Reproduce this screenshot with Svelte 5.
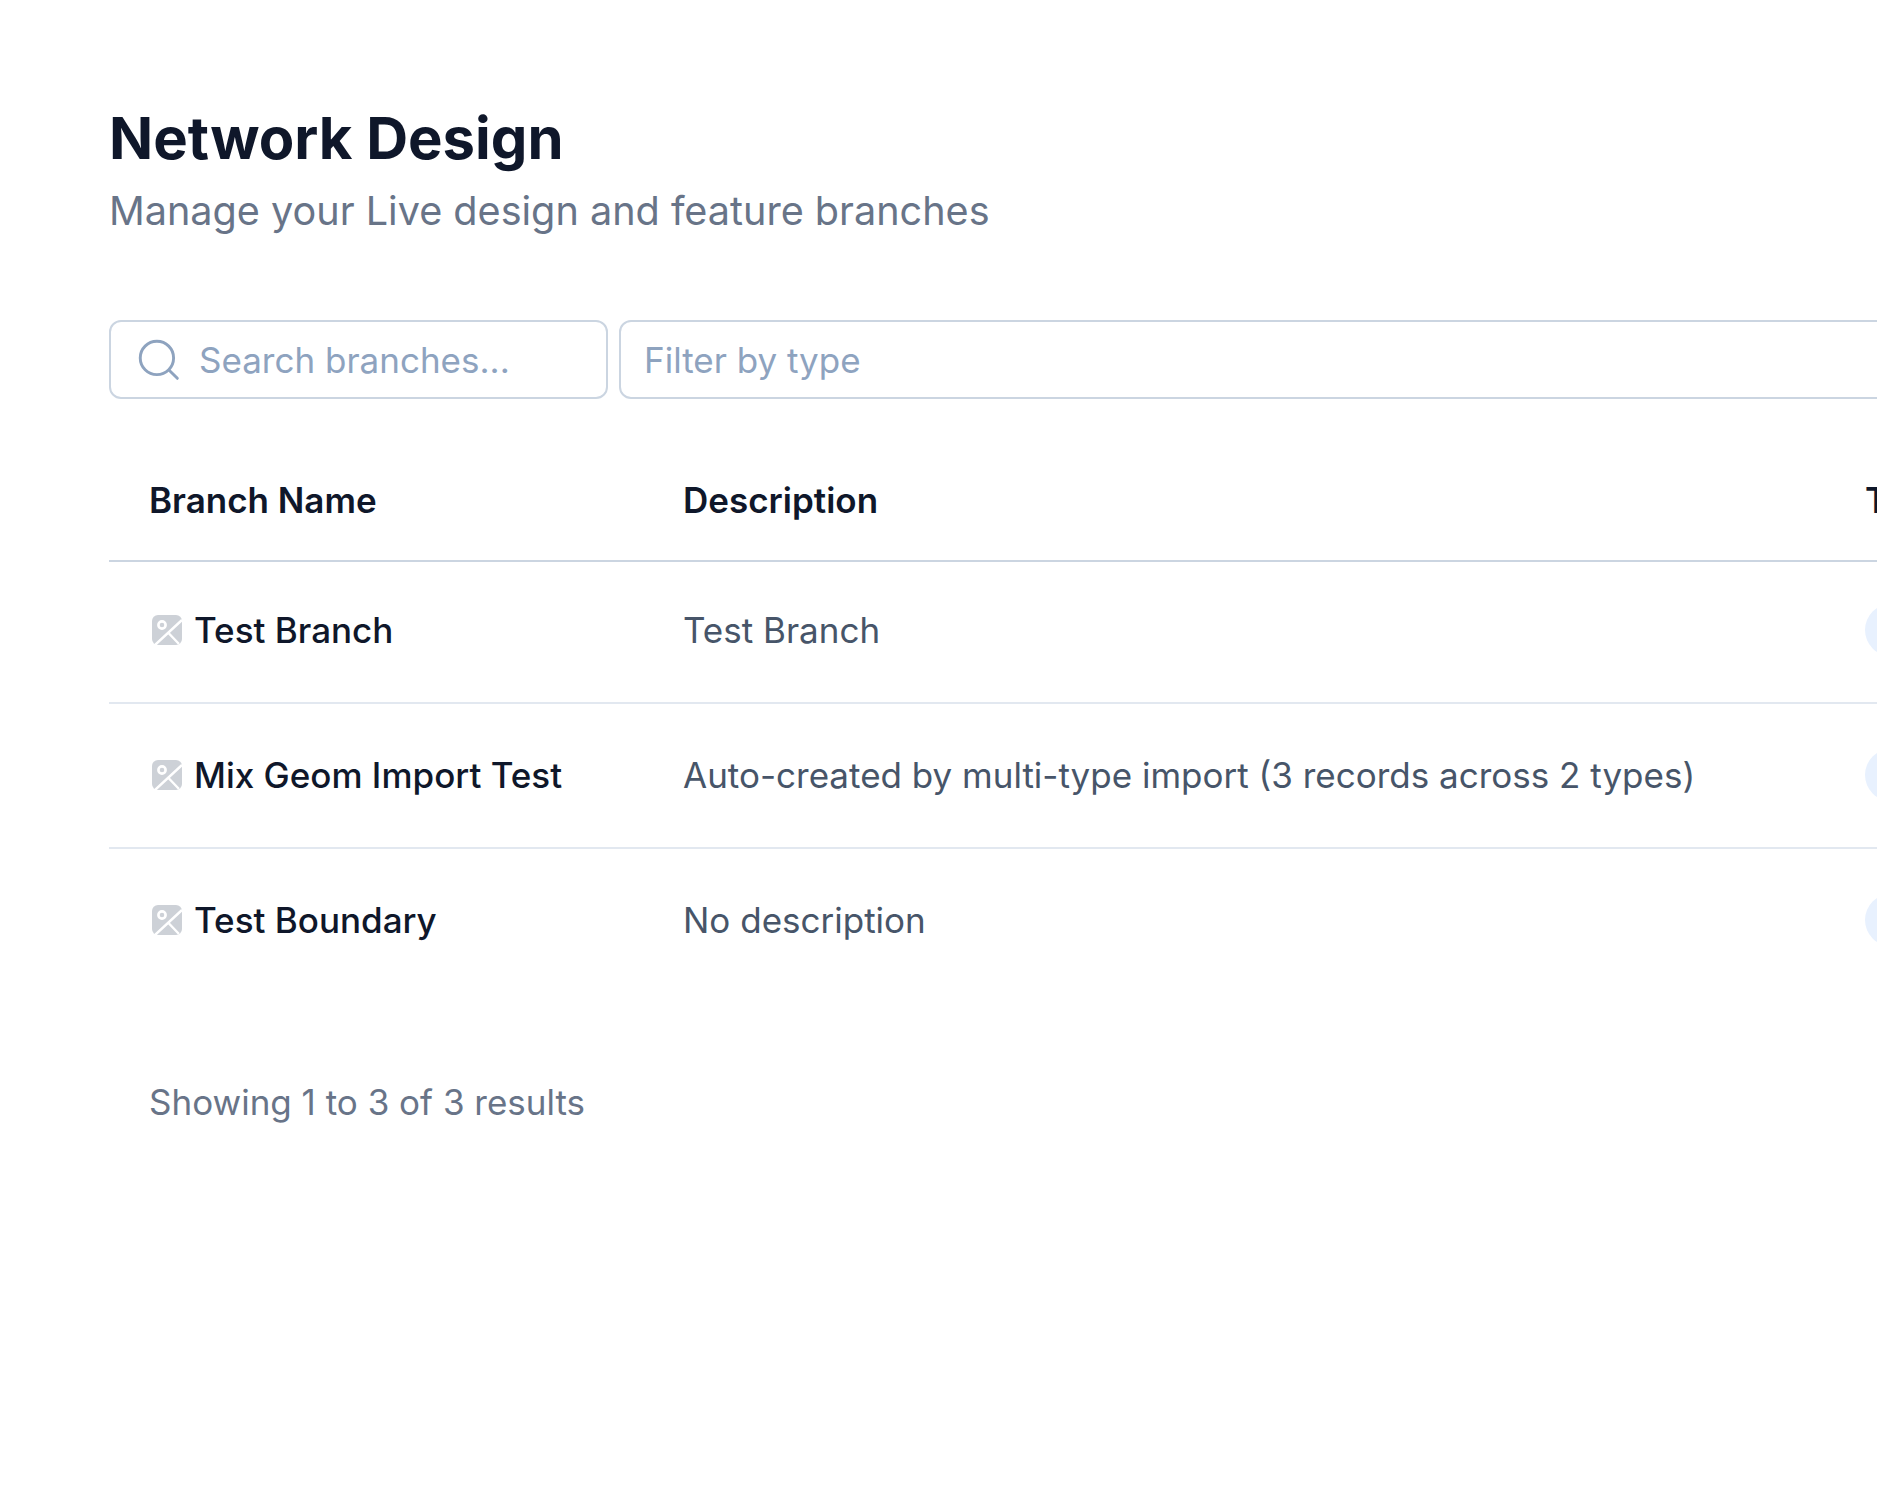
<script>
  const branches = [
    { name: 'Test Branch', description: 'Test Branch', type: 'Feature' },
    { name: 'Mix Geom Import Test', description: 'Auto-created by multi-type import (3 records across 2 types)', type: 'Feature' },
    { name: 'Test Boundary', description: 'No description', type: 'Feature' }
  ];
</script>

<div class="page">
  <header>
    <h1>Network Design</h1>
    <p class="subtitle">Manage your Live design and feature branches</p>
  </header>

  <div class="filters">
    <label class="search">
      <svg viewBox="0 0 24 24" width="50" height="50" fill="none" stroke="#8ea3bf" stroke-width="1.4" stroke-linecap="round">
        <circle cx="11" cy="11" r="8" />
        <path d="M17 17l3.8 3.8" />
      </svg>
      <input placeholder="Search branches..." />
    </label>
    <input class="type-filter" placeholder="Filter by type" />
  </div>

  <table>
    <thead>
      <tr>
        <th class="col-name">Branch Name</th>
        <th class="col-desc">Description</th>
        <th>Type</th>
      </tr>
    </thead>
    <tbody>
      {#each branches as branch}
        <tr>
          <td>
            <span class="name">
              <svg viewBox="0 0 30 30" width="30" height="30">
                <rect width="30" height="30" rx="6" fill="#cdd1d7" />
                <circle cx="10" cy="10" r="3.6" fill="none" stroke="#fff" stroke-width="2.6" />
                <path d="M3 30 30 5M16.5 18 27 29" stroke="#fff" stroke-width="2.4" fill="none" />
              </svg>
              {branch.name}
            </span>
          </td>
          <td class="desc">{branch.description}</td>
          <td><span class="pill">{branch.type}</span></td>
        </tr>
      {/each}
    </tbody>
  </table>

  <p class="showing">Showing 1 to 3 of 3 results</p>
</div>

<style>
  :global(body) { background: #fff; overflow: hidden; }
  .page { width: 2400px; padding: 100px 109px 0; font-family: Inter, "Noto Sans", sans-serif; box-sizing: border-box; }
  h1 { margin: 0; font-size: 58px; line-height: 76px; font-weight: 700; color: #0f172a; }
  .subtitle { margin: 6px 0 0; font-size: 39.6px; line-height: 58px; color: #687488; }
  .filters { display: flex; gap: 11px; margin-top: 80px; }
  .search, .type-filter { height: 79px; box-sizing: border-box; border: 2px solid #cbd5e1; border-radius: 12px; background: #fff; }
  .search { width: 499px; display: flex; align-items: center; gap: 15px; padding-left: 23px; }
  .search input { border: none; outline: none; flex: 1; min-width: 0; padding: 0; }
  .type-filter { flex: 1; padding: 0 23px; outline: none; }
  input { font: 400 35px Inter, sans-serif; color: #0f172a; }
  input::placeholder { color: #8ea3bf; opacity: 1; }
  table { width: 100%; margin-top: 40px; border-collapse: collapse; table-layout: fixed; }
  th { text-align: left; padding: 0 40px; height: 121px; font-size: 35px; font-weight: 600; color: #0f172a; border-bottom: 2px solid #cbd5e1; }
  .col-name { width: 454px; }
  .col-desc { width: 1102px; }
  td { padding: 0 40px 2px; height: 141px; font-size: 35px; border-bottom: 2px solid #e2e8f0; }
  tbody tr:first-child td { height: 136px; padding-bottom: 4px; }
  tbody tr:last-child td { border-bottom: none; }
  .name { display: flex; align-items: center; gap: 12px; font-weight: 500; color: #0f172a; white-space: nowrap; padding-left: 3px; }
  .desc { color: #475569; white-space: nowrap; }
  .pill { display: inline-block; height: 52px; line-height: 52px; padding: 0 20px; border-radius: 26px; background: #e8f1fe; color: #1d4ed8; font-size: 28px; }
  .showing { margin: 85px 0 0 40px; font-size: 35px; line-height: 50px; color: #687488; }
</style>
